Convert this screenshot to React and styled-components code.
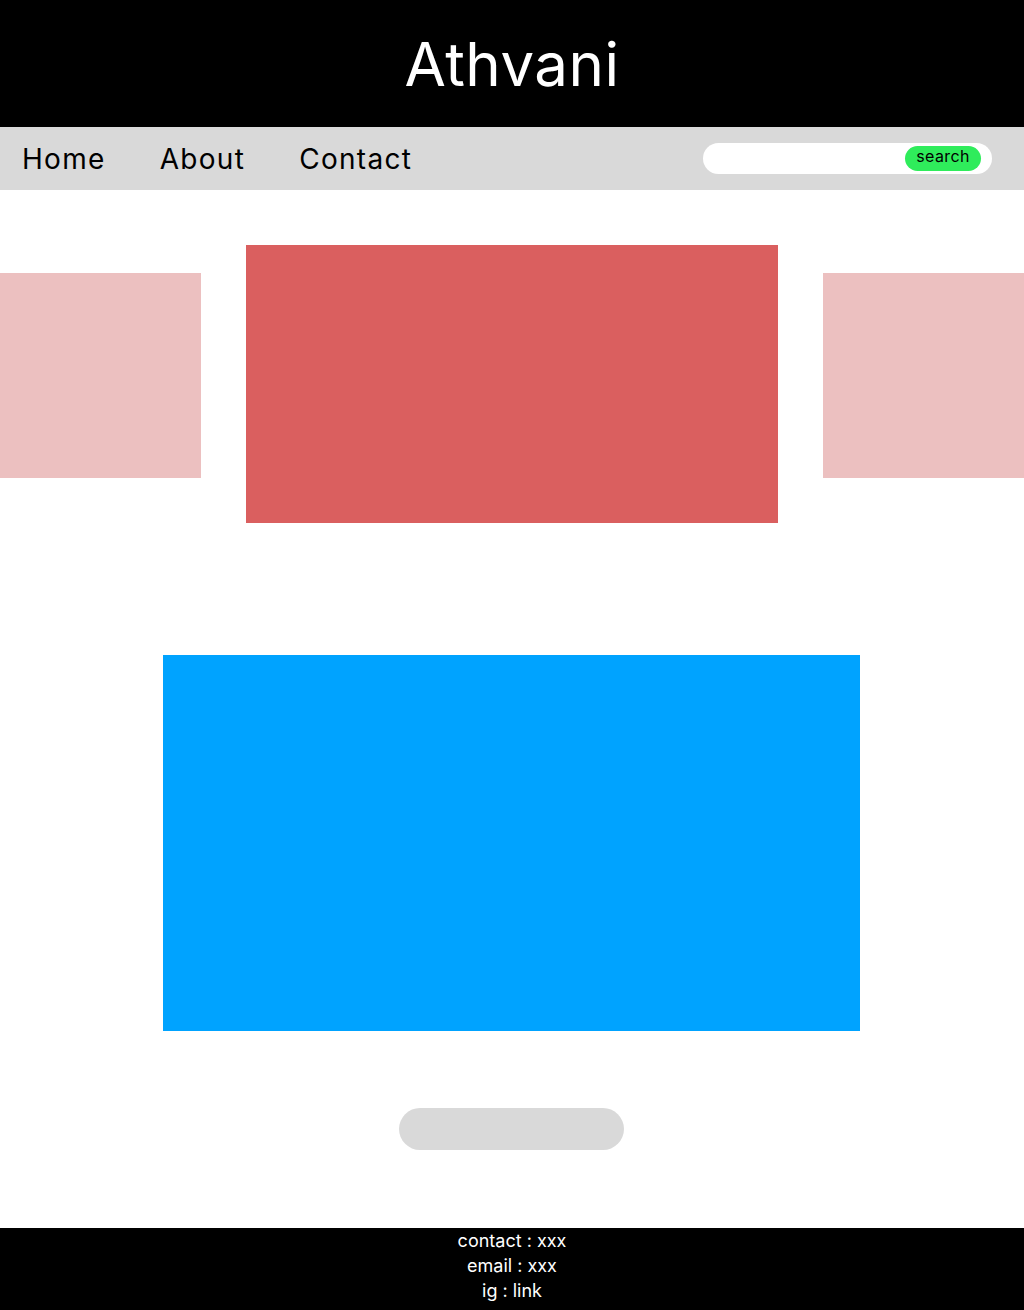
import React from 'react';
import styled, { createGlobalStyle } from 'styled-components';

const GlobalStyle = createGlobalStyle`
  body {
    margin: 0;
    font-family: Inter, 'Open Sans', sans-serif;
    background: #ffffff;
  }
`;

export default function App() {
  return (
    <>
      <GlobalStyle />
      <Header>
        <Title>Athvani</Title>
      </Header>
      <Nav>
        <Links>
          <NavLink>Home</NavLink>
          <NavLink>About</NavLink>
          <NavLink>Contact</NavLink>
        </Links>
        <Search>
          <SearchInput type="text" />
          <SearchButton>search</SearchButton>
        </Search>
      </Nav>
      <Main>
        <Carousel>
          <Slide $side />
          <Slide />
          <Slide $side />
        </Carousel>
        <Feature />
        <MoreButton />
      </Main>
      <Footer>
        <FooterLine>contact : xxx</FooterLine>
        <FooterLine>email : xxx</FooterLine>
        <FooterLine>ig : link</FooterLine>
      </Footer>
    </>
  );
}

const Header = styled.header`
  display: flex;
  justify-content: center;
  align-items: center;
  height: 127px;
  background: #000000;
`;

const Title = styled.h1`
  margin: 0;
  color: #ffffff;
  font-size: 60px;
  font-weight: 400;
  letter-spacing: 0.5px;
`;

const Nav = styled.nav`
  display: flex;
  justify-content: space-between;
  align-items: center;
  height: 63px;
  padding: 0 32px 0 22px;
  background: #d9d9d9;
`;

const Links = styled.div`
  display: flex;
  align-items: center;
  gap: 54px;
`;

const NavLink = styled.a`
  color: #000000;
  font-size: 28px;
  letter-spacing: 1.3px;
  cursor: pointer;
`;

const Search = styled.div`
  display: flex;
  align-items: center;
  width: 289px;
  height: 31px;
  padding: 0 11px 0 14px;
  box-sizing: border-box;
  background: #ffffff;
  border-radius: 16px;
`;

const SearchInput = styled.input`
  flex: 1;
  min-width: 0;
  border: none;
  outline: none;
  background: transparent;
`;

const SearchButton = styled.button`
  width: 76px;
  height: 25px;
  padding: 0 0 6px;
  border: none;
  border-radius: 13px;
  background: #2fec5b;
  color: #000000;
  font-family: inherit;
  font-size: 16px;
  letter-spacing: 0.4px;
  cursor: pointer;
`;

const Main = styled.main`
  display: flex;
  flex-direction: column;
  align-items: center;
  padding: 55px 0 78px;
`;

const Carousel = styled.div`
  display: flex;
  align-items: flex-start;
  gap: 45px;
  width: 100%;
`;

const Slide = styled.div`
  flex: ${(p) => (p.$side ? '0 0 201px' : '0 0 532px')};
  height: ${(p) => (p.$side ? '205px' : '278px')};
  margin-top: ${(p) => (p.$side ? '28px' : '0')};
  background: ${(p) => (p.$side ? '#ecc0c0' : '#da5f5f')};
`;

const Feature = styled.div`
  width: 697px;
  height: 376px;
  margin: 132px 0 0 -1px;
  background: #00a3ff;
`;

const MoreButton = styled.button`
  width: 225px;
  height: 42px;
  margin: 77px 0 0 -2px;
  border: none;
  border-radius: 21px;
  background: #d9d9d9;
`;

const Footer = styled.footer`
  display: flex;
  flex-direction: column;
  align-items: center;
  height: 82px;
  background: #000000;
`;

const FooterLine = styled.div`
  color: #ffffff;
  font-size: 18px;
  line-height: 25px;
`;
